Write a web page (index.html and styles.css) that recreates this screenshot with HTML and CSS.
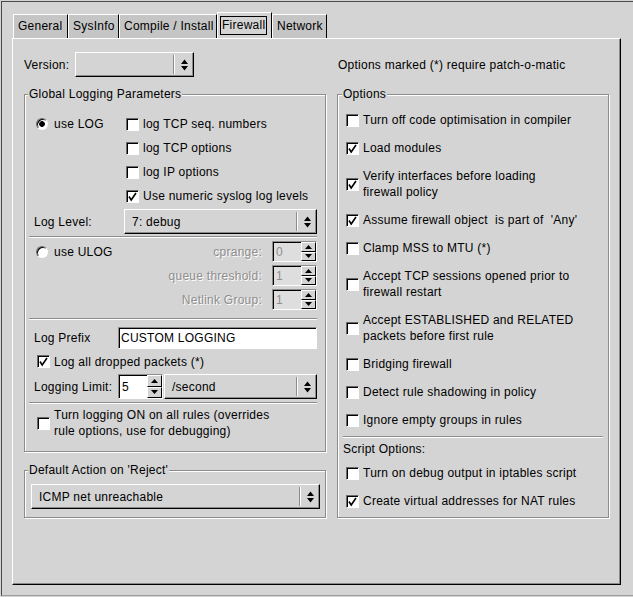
FILE: index.html
```html
<!DOCTYPE html>
<html>
<head>
<meta charset="utf-8">
<title>Firewall</title>
<link rel="stylesheet" href="styles.css">
</head>
<body>
<div class="window">
  <div class="tabs">
    <div class="tab w55">General</div>
    <div class="tab w51">SysInfo</div>
    <div class="tab w98">Compile / Install</div>
    <div class="tab tab-active w55"><span class="focus">Firewall</span></div>
    <div class="tab w55">Network</div>
  </div>
  <div class="panel">
    <div class="col">
      <div class="top-row">
        <span class="version-label">Version:</span>
        <div class="combo combo-version">
          <span class="combo-val"></span><span class="combo-sep"></span>
          <span class="combo-arrows"><svg width="7" height="12" viewBox="0 0 7 12"><path d="M3.5 0.5L7 5H0z M0 7H7L3.5 11.5z"/></svg></span>
        </div>
      </div>

      <div class="group group-log">
        <div class="gtitle"><span>Global Logging Parameters</span></div>
        <div class="log-block">
          <div class="radio-cell log-radio"><span class="radio radio-on"></span>use LOG</div>
          <div class="checks">
            <div class="crow"><span class="cb"></span>log TCP seq. numbers</div>
            <div class="crow"><span class="cb"></span>log TCP options</div>
            <div class="crow"><span class="cb"></span>log IP options</div>
            <div class="crow"><span class="cb"><svg width="11" height="11" viewBox="0 0 11 11"><path d="M2 5.5L4.2 9L9 2" fill="none" stroke="#000" stroke-width="1.6"/></svg></span>Use numeric syslog log levels</div>
          </div>
        </div>
        <div class="field-row loglevel">
          <span class="lbl-90">Log Level:</span>
          <div class="combo combo-grow">
            <span class="combo-val">7: debug</span><span class="combo-sep"></span>
            <span class="combo-arrows"><svg width="7" height="12" viewBox="0 0 7 12"><path d="M3.5 0.5L7 5H0z M0 7H7L3.5 11.5z"/></svg></span>
          </div>
        </div>
        <div class="sep sep-a"></div>
        <div class="ulog">
          <div class="radio-cell ulog-radio"><span class="radio"></span>use ULOG</div>
          <div class="ufields">
            <div class="ufield"><span class="dis-lbl">cprange:</span>
              <div class="spin spin-dis spin-h21"><span class="spin-val">0</span>
                <span class="spin-btns"><span class="sbtn"><svg width="7" height="4" viewBox="0 0 7 4"><path d="M3.5 0L7 4H0z"/></svg></span><span class="sbtn"><svg width="7" height="4" viewBox="0 0 7 4"><path d="M0 0H7L3.5 4z"/></svg></span></span>
              </div>
            </div>
            <div class="ufield"><span class="dis-lbl">queue threshold:</span>
              <div class="spin spin-dis spin-h21"><span class="spin-val">1</span>
                <span class="spin-btns"><span class="sbtn"><svg width="7" height="4" viewBox="0 0 7 4"><path d="M3.5 0L7 4H0z"/></svg></span><span class="sbtn"><svg width="7" height="4" viewBox="0 0 7 4"><path d="M0 0H7L3.5 4z"/></svg></span></span>
              </div>
            </div>
            <div class="ufield"><span class="dis-lbl">Netlink Group:</span>
              <div class="spin spin-dis spin-h21"><span class="spin-val">1</span>
                <span class="spin-btns"><span class="sbtn"><svg width="7" height="4" viewBox="0 0 7 4"><path d="M3.5 0L7 4H0z"/></svg></span><span class="sbtn"><svg width="7" height="4" viewBox="0 0 7 4"><path d="M0 0H7L3.5 4z"/></svg></span></span>
              </div>
            </div>
          </div>
        </div>
        <div class="sep sep-b"></div>
        <div class="field-row prefix">
          <span class="lbl-84">Log Prefix</span>
          <div class="input">CUSTOM LOGGING</div>
        </div>
        <div class="field-row dropped"><span class="cb"><svg width="11" height="11" viewBox="0 0 11 11"><path d="M2 5.5L4.2 9L9 2" fill="none" stroke="#000" stroke-width="1.6"/></svg></span>Log all dropped packets (*)</div>
        <div class="field-row limit">
          <span class="lbl-84">Logging Limit:</span>
          <div class="spin spin-h25 spin-limit"><span class="spin-val">5</span>
            <span class="spin-btns"><span class="sbtn"><svg width="7" height="4" viewBox="0 0 7 4"><path d="M3.5 0L7 4H0z"/></svg></span><span class="sbtn"><svg width="7" height="4" viewBox="0 0 7 4"><path d="M0 0H7L3.5 4z"/></svg></span></span>
          </div>
          <div class="combo combo-grow">
            <span class="combo-val">/second</span><span class="combo-sep"></span>
            <span class="combo-arrows"><svg width="7" height="12" viewBox="0 0 7 12"><path d="M3.5 0.5L7 5H0z M0 7H7L3.5 11.5z"/></svg></span>
          </div>
        </div>
        <div class="sep sep-c"></div>
        <div class="field-row turnon"><span class="cb"></span><span>Turn logging ON on all rules (overrides<br>rule options, use for debugging)</span></div>
      </div>

      <div class="group group-rej">
        <div class="gtitle"><span>Default Action on 'Reject'</span></div>
        <div class="combo rej-combo">
          <span class="combo-val">ICMP net unreachable</span><span class="combo-sep"></span>
          <span class="combo-arrows"><svg width="7" height="12" viewBox="0 0 7 12"><path d="M3.5 0.5L7 5H0z M0 7H7L3.5 11.5z"/></svg></span>
        </div>
      </div>
    </div>

    <div class="col">
      <div class="note">Options marked (*) require patch-o-matic</div>
      <div class="group group-opts">
        <div class="gtitle"><span>Options</span></div>
        <div class="opt opts-first"><span class="cb"></span>Turn off code optimisation in compiler</div>
        <div class="opt"><span class="cb"><svg width="11" height="11" viewBox="0 0 11 11"><path d="M2 5.5L4.2 9L9 2" fill="none" stroke="#000" stroke-width="1.6"/></svg></span>Load modules</div>
        <div class="opt two"><span class="cb"><svg width="11" height="11" viewBox="0 0 11 11"><path d="M2 5.5L4.2 9L9 2" fill="none" stroke="#000" stroke-width="1.6"/></svg></span><span>Verify interfaces before loading<br>firewall policy</span></div>
        <div class="opt"><span class="cb"><svg width="11" height="11" viewBox="0 0 11 11"><path d="M2 5.5L4.2 9L9 2" fill="none" stroke="#000" stroke-width="1.6"/></svg></span>Assume firewall object&nbsp; is part of&nbsp; 'Any'</div>
        <div class="opt"><span class="cb"></span>Clamp MSS to MTU (*)</div>
        <div class="opt two"><span class="cb"></span><span>Accept TCP sessions opened prior to<br>firewall restart</span></div>
        <div class="opt two"><span class="cb"></span><span>Accept ESTABLISHED and RELATED<br>packets before first rule</span></div>
        <div class="opt"><span class="cb"></span>Bridging firewall</div>
        <div class="opt"><span class="cb"></span>Detect rule shadowing in policy</div>
        <div class="opt"><span class="cb"></span>Ignore empty groups in rules</div>
        <div class="sep sep-o"></div>
        <div class="script-lbl">Script Options:</div>
        <div class="opt script-first"><span class="cb"></span>Turn on debug output in iptables script</div>
        <div class="opt"><span class="cb"><svg width="11" height="11" viewBox="0 0 11 11"><path d="M2 5.5L4.2 9L9 2" fill="none" stroke="#000" stroke-width="1.6"/></svg></span>Create virtual addresses for NAT rules</div>
      </div>
    </div>
  </div>
</div>
</body>
</html>
```

FILE: styles.css
```css
* { box-sizing: border-box; }

body {
  margin: 0;
  background: #d4d4d4;
  font-family: "Liberation Sans", Arial, Helvetica, sans-serif;
  font-size: 12px;
  letter-spacing: 0.25px;
  color: #000;
}

.window {
  margin: 1px 0 0 1px;
  width: 632px;
  height: 595px;
  border-top: 1px solid #4a4a4a;
  border-left: 1px solid #4a4a4a;
  border-bottom: 1px solid #9c9c9c;
  padding: 10px 0 0 10px;
}

/* tabs */
.tabs {
  display: flex;
  align-items: flex-end;
  height: 26px;
  padding-left: 1px;
}
.tab {
  height: 24px;
  line-height: 22px;
  padding-left: 4px;
  background: #c5c5c5;
  border-top: 1px solid #fff;
  border-left: 1px solid #fff;
  border-right: 1px solid #000;
  white-space: nowrap;
}
.tab-active {
  height: 26px;
  background: #d4d4d4;
  padding-left: 2px;
  display: flex;
  align-items: center;
}
.focus {
  border: 1px solid #000;
  padding: 0 1px;
  line-height: 17px;
}
.w55 { width: 55px; }
.w51 { width: 51px; }
.w98 { width: 98px; }

/* panel */
.panel {
  width: 609px;
  height: 547px;
  border-top: 1px solid #fff;
  border-left: 1px solid #fff;
  border-right: 1px solid #000;
  border-bottom: 1px solid #000;
  box-shadow: inset -1px -1px 0 #8a8a8a;
  padding: 13px 0 0 11px;
  display: grid;
  grid-template-columns: 303px 272px;
  column-gap: 10px;
  align-items: start;
}
.col {
  display: flex;
  flex-direction: column;
  align-items: flex-start;
}
.top-row {
  height: 25px;
  display: flex;
  align-items: center;
}
.version-label { width: 51px; }
.combo-version { width: 119px; }
.note {
  height: 25px;
  display: flex;
  align-items: center;
  padding-left: 1px;
  white-space: nowrap;
}

/* group boxes */
.group {
  border: 1px solid #8c8c8c;
  box-shadow: inset 1px 1px 0 #fff, 1px 1px 0 #fff;
}
.gtitle {
  height: 14px;
  line-height: 14px;
  margin: -8px 0 -6px -6px;
  white-space: nowrap;
}
.gtitle span {
  display: inline-block;
  background: #d4d4d4;
  padding: 0 1px;
}
.group-log {
  width: 302px;
  margin-top: 17px;
  padding: 0 8px 12px 9px;
}
.group-rej {
  width: 302px;
  margin-top: 18px;
  padding: 0 5px 8px 6px;
}
.group-rej .gtitle { margin-left: -3px; }
.rej-combo { margin-top: 13px; width: 100%; }
.group-opts {
  width: 272px;
  margin-top: 17px;
  padding: 0 5px 2px 8px;
}
.group-opts .gtitle { margin-left: -4px; }

/* rows */
.log-block { display: flex; margin-top: 17px; }
.radio-cell {
  display: flex;
  align-items: center;
  height: 24px;
  padding-left: 2px;
  white-space: nowrap;
}
.log-radio { width: 92px; }
.ulog-radio { height: 21px; }
.checks { display: flex; flex-direction: column; }
.crow {
  height: 24px;
  display: flex;
  align-items: center;
  white-space: nowrap;
}
.field-row {
  display: flex;
  align-items: center;
  white-space: nowrap;
}
.loglevel { margin-top: 1px; height: 25px; }
.lbl-90 { width: 90px; flex: none; }
.lbl-84 { width: 84px; flex: none; }
.combo-grow { flex: 1; }

.sep {
  height: 2px;
  border-top: 1px solid #8c8c8c;
  border-bottom: 1px solid #fff;
  margin-left: -5px;
  align-self: stretch;
}
.sep-a { margin-top: 2px; margin-bottom: 3px; }
.sep-b { margin-top: 8px; }
.sep-c { margin-top: 3px; }

.ulog { display: flex; }
.ufields {
  flex: 1;
  display: flex;
  flex-direction: column;
  align-items: flex-end;
  gap: 3px;
}
.ufield {
  display: flex;
  align-items: center;
  height: 21px;
  white-space: nowrap;
}
.dis-lbl {
  color: #8e8e8e;
  text-shadow: 1px 1px 0 #fff;
  margin-right: 10px;
}
.prefix { margin-top: 7px; height: 22px; }
.dropped { height: 25px; padding-left: 3px; }
.limit { height: 25px; }
.spin-limit { margin-right: 1px; }
.turnon {
  margin-top: 3px;
  padding-left: 3px;
  line-height: 16px;
}

.opt {
  height: 28px;
  display: flex;
  align-items: center;
  white-space: nowrap;
  line-height: 16px;
}
.opt.two { height: 44px; }
.opts-first { margin-top: 11px; }
.sep-o { margin: 2px 0 0 -3px; }
.script-lbl {
  margin: 3px 0 0 -3px;
  height: 16px;
  line-height: 16px;
}
.script-first { margin-top: 2px; }

/* widgets */
.combo {
  display: flex;
  align-items: center;
  height: 25px;
  background: #d4d4d4;
  border: 1px solid;
  border-color: #fff #000 #000 #fff;
  box-shadow: inset -1px -1px 0 #8c8c8c;
  padding-left: 7px;
}
.combo-val { flex: 1; white-space: nowrap; }
.combo-sep {
  width: 2px;
  height: 19px;
  border-left: 1px solid #8c8c8c;
  border-right: 1px solid #fff;
}
.combo-arrows {
  width: 18px;
  display: flex;
  justify-content: center;
}
.combo-arrows svg, .sbtn svg, .cb svg { display: block; }

.spin {
  display: flex;
  width: 45px;
  flex: none;
  border: 1px solid;
  border-color: #8c8c8c #fff #fff #8c8c8c;
  box-shadow: inset 1px 1px 0 #000;
  background: #fff;
}
.spin-h21 { height: 21px; }
.spin-h25 { height: 25px; }
.spin-val {
  flex: 1;
  padding-left: 3px;
  display: flex;
  align-items: center;
}
.spin-btns {
  width: 15px;
  display: flex;
  flex-direction: column;
}
.sbtn {
  flex: 1;
  display: flex;
  align-items: center;
  justify-content: center;
  background: #d4d4d4;
  border: 1px solid;
  border-color: #fff #000 #000 #fff;
}
.spin-dis { background: #dedede; color: #8e8e8e; }

.input {
  flex: 1;
  height: 22px;
  display: flex;
  align-items: center;
  border: 1px solid;
  border-color: #8c8c8c #fff #fff #8c8c8c;
  box-shadow: inset 1px 1px 0 #000;
  background: #fff;
  padding-left: 2px;
}

.radio {
  width: 12px;
  height: 12px;
  flex: none;
  border-radius: 50%;
  border: 1px solid;
  border-color: #6a6a6a #fff #fff #6a6a6a;
  background: #fff;
  box-shadow: inset 1px 1px 0 #000;
  margin-right: 6px;
}
.radio-on {
  background: radial-gradient(circle at 50% 50%, #000 0, #000 2.5px, #fff 3.2px);
}

.cb {
  width: 13px;
  height: 13px;
  flex: none;
  border: 1px solid;
  border-color: #6a6a6a #fff #fff #6a6a6a;
  box-shadow: inset 1px 1px 0 #000;
  background: #fff;
  margin-right: 4px;
  display: flex;
  align-items: center;
  justify-content: center;
}
```
